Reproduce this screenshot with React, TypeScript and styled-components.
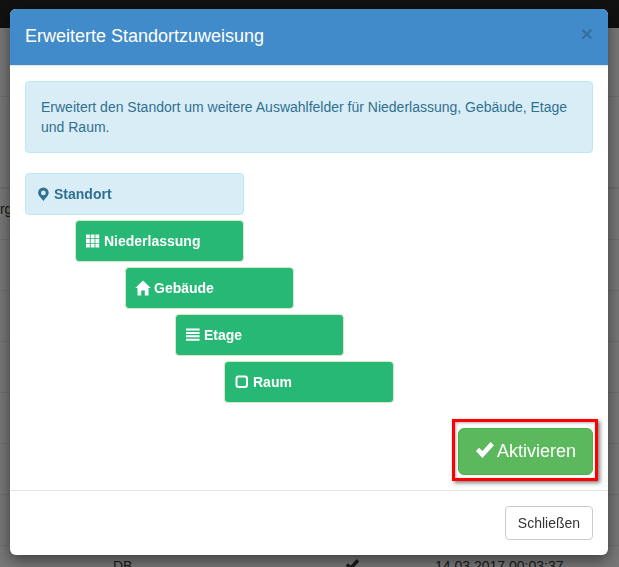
import React from "react";
import styled, { createGlobalStyle } from "styled-components";

const GlobalStyle = createGlobalStyle`
  html, body {
    margin: 0;
    padding: 0;
    height: 100%;
    overflow: hidden;
    font-family: "Liberation Sans", Arial, sans-serif;
    font-size: 14px;
    color: #333;
    background: #fff;
  }
`;

/* page behind the modal */
const Page = styled.div`
  width: 619px;
  height: 567px;
  overflow: hidden;
  background: #f0f0f0;
`;

const Navbar = styled.div`
  height: 28px;
  background: #222;
`;

const PageHeading = styled.div`
  height: 68px;
  border-bottom: 1px solid #ddd;
`;

const TableHead = styled.div`
  height: 92px;
  border-bottom: 2px solid #ddd;
  box-sizing: border-box;
`;

const Row = styled.div`
  height: 51px;
  box-sizing: border-box;
  padding-top: 10px;
  line-height: 20px;
  border-bottom: 1px solid #ddd;
  display: grid;
  grid-template-columns: 113px 232px 90px 1fr;
  align-items: start;
  color: #333;
`;

const Cell = styled.div`
  white-space: nowrap;
`;

const ClippedCell = styled(Cell)`
  margin-left: -11px;
`;

const Backdrop = styled.div`
  position: fixed;
  inset: 0;
  background: rgba(0, 0, 0, 0.5);
`;

/* modal */
const Modal = styled.div`
  position: fixed;
  left: 10px;
  top: 9px;
  width: 598px;
  height: 546px;
  display: flex;
  flex-direction: column;
  background: #fff;
  border-radius: 6px;
  box-shadow: 0 5px 15px rgba(0, 0, 0, 0.5);
`;

const Header = styled.div`
  height: 56px;
  padding: 0 15px;
  display: flex;
  align-items: center;
  justify-content: space-between;
  background: #428bca;
  border-bottom: 1px solid #e5e5e5;
  border-radius: 6px 6px 0 0;
`;

const Title = styled.h4`
  margin: -2px 0 0;
  font-size: 18px;
  font-weight: 400;
  color: #fff;
`;

const Close = styled.span`
  font-size: 21px;
  font-weight: 700;
  line-height: 1;
  color: #000;
  opacity: 0.2;
  margin-top: -7px;
`;

const Body = styled.div`
  flex: 1;
  padding: 15px;
  display: flex;
  flex-direction: column;
`;

const Alert = styled.div`
  padding: 15px;
  line-height: 20px;
  color: #31708f;
  background: #d9edf7;
  border: 1px solid #bce8f1;
  border-radius: 4px;
  margin-bottom: 20px;
`;

const Stack = styled.div`
  display: flex;
  flex-direction: column;
  gap: 5px;
`;

const Level = styled.div<{ $indent: number; $root?: boolean; $width: number }>`
  box-sizing: border-box;
  height: 42px;
  width: ${(p) => p.$width}px;
  margin-left: ${(p) => p.$indent}px;
  padding: 0 10px;
  display: flex;
  align-items: center;
  gap: 4px;
  font-weight: 700;
  border-radius: 4px;
  color: ${(p) => (p.$root ? "#31708f" : "#fff")};
  background: ${(p) => (p.$root ? "#d9edf7" : "#27b875")};
  border: 1px solid ${(p) => (p.$root ? "#bce8f1" : "#d6e9c6")};
`;

const LevelIcon = styled.svg`
  width: 14px;
  height: 14px;
  flex: none;
  fill: currentColor;
  overflow: visible;
`;

const ActionRow = styled.div`
  margin-top: 25px;
  display: flex;
  justify-content: flex-end;
`;

const Highlighted = styled.div`
  position: relative;
`;

const RedFrame = styled.div`
  position: absolute;
  left: -6px;
  right: -5px;
  top: -9px;
  bottom: -6px;
  border: 3px solid #f00;
  box-shadow: 2px 2px 4px rgba(0, 0, 0, 0.5), inset 1px 1px 3px rgba(0, 0, 0, 0.3);
  pointer-events: none;
`;

const ActivateButton = styled.button`
  box-sizing: border-box;
  width: 135px;
  height: 47px;
  padding: 0;
  display: flex;
  align-items: center;
  justify-content: center;
  gap: 2px;
  font-family: inherit;
  font-size: 18px;
  color: #fff;
  background: #5cb85c;
  border: 1px solid #4cae4c;
  border-radius: 6px;
`;

const CheckIcon = styled.svg`
  width: 20px;
  height: 18px;
  fill: currentColor;
  flex: none;
  margin-top: -3px;
`;

const Footer = styled.div`
  padding: 15px;
  display: flex;
  justify-content: flex-end;
  border-top: 1px solid #e5e5e5;
`;

const CloseButton = styled.button`
  box-sizing: border-box;
  width: 88px;
  height: 34px;
  padding: 0;
  font-family: inherit;
  font-size: 14px;
  color: #333;
  background: #fff;
  border: 1px solid #ccc;
  border-radius: 4px;
`;

const TableCheck = styled.svg`
  width: 15px;
  height: 14px;
  margin-top: 2px;
  fill: #333;
  display: block;
`;

const checkPath = "M1 10 L4 6.8 L7.4 10 L15.6 1 L19 4.2 L7.4 17 Z";

const MarkerIcon = () => (
  <LevelIcon viewBox="0 0 14 14">
    <path
      fillRule="evenodd"
      d="M7.400 0.500a5.300 5.300 0 0 0-5.300 5.300c0 3 3.600 5.700 5.300 8.200 1.700-2.500 5.300-5.200 5.300-8.200a5.300 5.300 0 0 0-5.300-5.300zm0 3a2.400 2.400 0 1 1 0 4.800 2.400 2.400 0 0 1 0-4.800z"
    />
  </LevelIcon>
);

const GridIcon = () => (
  <LevelIcon viewBox="0 0 14 14">
    <path d="M0 0.500h3.800v3.800H0zM4.700 0.500h3.800v3.800H4.700zM9.400 0.500h3.800v3.800H9.400zM0 5.100h3.800v3.800H0zM4.700 5.100h3.800v3.800H4.700zM9.400 5.100h3.800v3.800H9.400zM0 9.700h3.800v3.800H0zM4.700 9.700h3.800v3.800H4.700zM9.400 9.700h3.800v3.800H9.400z" />
  </LevelIcon>
);

const HomeIcon = () => (
  <LevelIcon viewBox="0 0 14 14">
    <path d="M7 -0.500 14.800 7H12.500V14.500H8.800V9.600H5.200V14.500H1.500V7H-0.800z" />
  </LevelIcon>
);

const LinesIcon = () => (
  <LevelIcon viewBox="0 0 14 14">
    <path d="M0 0.500h13.600v2H0zM0 3.900h13.600v2H0zM0 7.300h13.600v2H0zM0 10.800h13.600v2H0z" />
  </LevelIcon>
);

const SquareIcon = () => (
  <LevelIcon viewBox="0 0 14 14">
    <path
      fillRule="evenodd"
      d="M3.500 0.500h6.500a3 3 0 0 1 3 3v6.500a3 3 0 0 1-3 3H3.500a3 3 0 0 1-3-3V3.500a3 3 0 0 1 3-3zm0.300 2a1.300 1.300 0 0 0-1.300 1.300v5.900a1.300 1.300 0 0 0 1.300 1.300h5.900a1.300 1.300 0 0 0 1.300-1.300V3.800a1.300 1.300 0 0 0-1.300-1.300z"
    />
  </LevelIcon>
);

const levels = [
  { label: "Niederlassung", indent: 50, width: 169, Icon: GridIcon },
  { label: "Gebäude", indent: 100, width: 169, Icon: HomeIcon },
  { label: "Etage", indent: 150, width: 169, Icon: LinesIcon },
  { label: "Raum", indent: 199, width: 170, Icon: SquareIcon },
];

const App = () => {
  return (
    <>
      <GlobalStyle />
      <Page>
        <Navbar />
        <PageHeading />
        <TableHead />
        <Row>
          <ClippedCell>Org</ClippedCell>
        </Row>
        <Row />
        <Row />
        <Row />
        <Row />
        <Row />
        <Row />
        <Row>
          <span />
          <Cell>DB</Cell>
          <TableCheck viewBox="0 0 20 18">
            <path d={checkPath} />
          </TableCheck>
          <Cell>14.03.2017 00:03:37</Cell>
        </Row>
      </Page>
      <Backdrop />
      <Modal>
        <Header>
          <Title>Erweiterte Standortzuweisung</Title>
          <Close>×</Close>
        </Header>
        <Body>
          <Alert>
            Erweitert den Standort um weitere Auswahlfelder für Niederlassung,
            Gebäude, Etage und Raum.
          </Alert>
          <Stack>
            <Level $indent={0} $width={219} $root>
              <MarkerIcon />
              Standort
            </Level>
            {levels.map(({ label, indent, width, Icon }) => (
              <Level key={label} $indent={indent} $width={width}>
                <Icon />
                {label}
              </Level>
            ))}
          </Stack>
          <ActionRow>
            <Highlighted>
              <ActivateButton>
                <CheckIcon viewBox="0 0 20 18">
                  <path d={checkPath} />
                </CheckIcon>
                Aktivieren
              </ActivateButton>
              <RedFrame />
            </Highlighted>
          </ActionRow>
        </Body>
        <Footer>
          <CloseButton>Schließen</CloseButton>
        </Footer>
      </Modal>
    </>
  );
};

export default App;
